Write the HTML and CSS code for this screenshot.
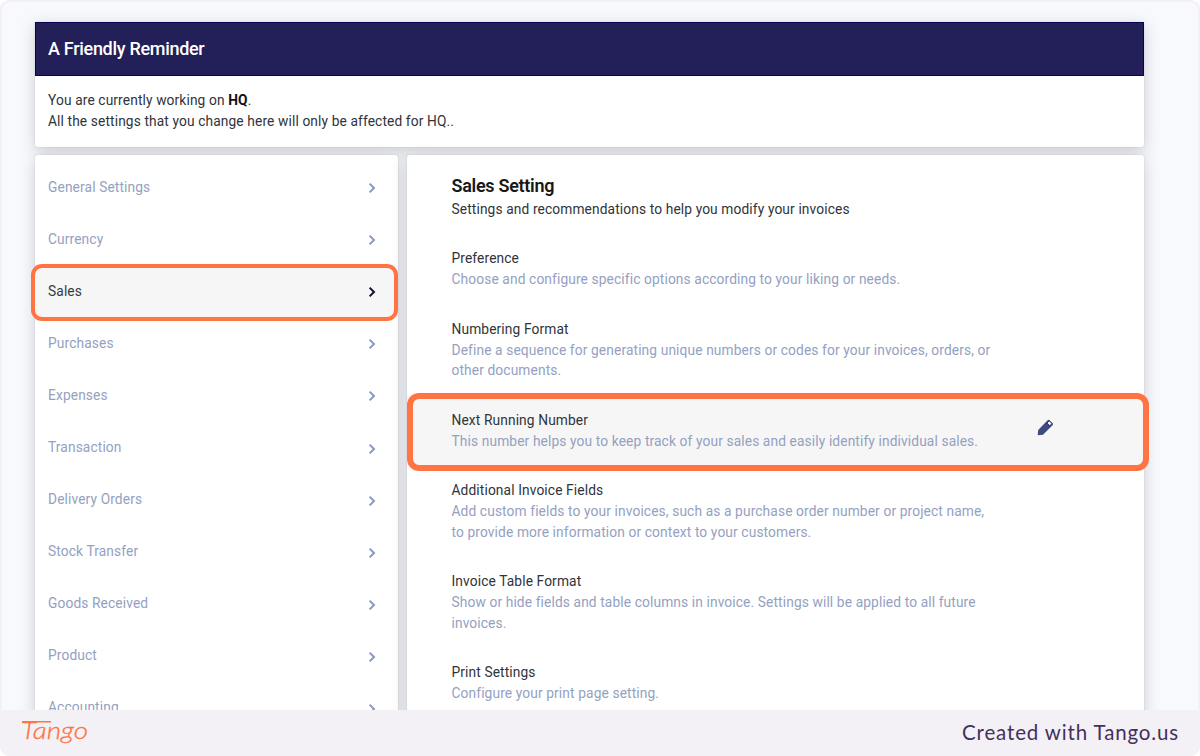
FILE: index.html
```html
<!DOCTYPE html>
<html lang="en">
<head>
<meta charset="utf-8">
<title>Sales Setting</title>
<link rel="stylesheet" href="styles.css">
</head>
<body>
<svg width="0" height="0" class="defs">
  <symbol id="chevron" viewBox="0 0 8 12"><path d="M1.6 1.6 6 6 1.6 10.4" fill="none" stroke="currentColor" stroke-width="2"/></symbol>
</svg>
<div class="frame">
  <main class="page">
    <section class="card reminder">
      <h1 class="reminder-title">A Friendly Reminder</h1>
      <div class="reminder-body">
        <div>You are currently working on <b>HQ</b>.</div>
        <div>All the settings that you change here will only be affected for HQ..</div>
      </div>
    </section>
    <div class="columns">
      <nav class="card menu">
        <a class="menu-item"><span>General Settings</span><svg class="chevron"><use href="#chevron"/></svg></a>
        <a class="menu-item"><span>Currency</span><svg class="chevron"><use href="#chevron"/></svg></a>
        <a class="menu-item active"><span>Sales</span><svg class="chevron"><use href="#chevron"/></svg></a>
        <a class="menu-item"><span>Purchases</span><svg class="chevron"><use href="#chevron"/></svg></a>
        <a class="menu-item"><span>Expenses</span><svg class="chevron"><use href="#chevron"/></svg></a>
        <a class="menu-item"><span>Transaction</span><svg class="chevron"><use href="#chevron"/></svg></a>
        <a class="menu-item"><span>Delivery Orders</span><svg class="chevron"><use href="#chevron"/></svg></a>
        <a class="menu-item"><span>Stock Transfer</span><svg class="chevron"><use href="#chevron"/></svg></a>
        <a class="menu-item"><span>Goods Received</span><svg class="chevron"><use href="#chevron"/></svg></a>
        <a class="menu-item"><span>Product</span><svg class="chevron"><use href="#chevron"/></svg></a>
        <a class="menu-item"><span>Accounting</span><svg class="chevron"><use href="#chevron"/></svg></a>
      </nav>
      <section class="card settings">
        <h2 class="settings-title">Sales Setting</h2>
        <p class="settings-sub">Settings and recommendations to help you modify your invoices</p>
        <div class="item"><h3>Preference</h3><p>Choose and configure specific options according to your liking or needs.</p></div>
        <div class="item"><h3>Numbering Format</h3><p>Define a sequence for generating unique numbers or codes for your invoices, orders, or<br>other documents.</p></div>
        <div class="item selected">
          <div><h3>Next Running Number</h3><p>This number helps you to keep track of your sales and easily identify individual sales.</p></div>
          <svg class="pencil" viewBox="0 0 17 17"><path d="M.7 16.3 1.2 11 10.6 1.3q1-.9 2 0l2.9 2.9q.9 1 0 2L6 15.8Z" fill="#3c4b80"/><path d="m10 4.1 1.8-1.9q.5-.4 1 0l1.8 1.8q.4.5 0 1l-1.9 1.8Z" fill="#f6f6f6" stroke="#1c2c68" stroke-width="1"/></svg>
        </div>
        <div class="item"><h3>Additional Invoice Fields</h3><p>Add custom fields to your invoices, such as a purchase order number or project name,<br>to provide more information or context to your customers.</p></div>
        <div class="item"><h3>Invoice Table Format</h3><p>Show or hide fields and table columns in invoice. Settings will be applied to all future<br>invoices.</p></div>
        <div class="item"><h3>Print Settings</h3><p>Configure your print page setting.</p></div>
      </section>
    </div>
  </main>
  <footer class="footer">
    <svg class="logo" viewBox="0 0 72 36"><text x="0" y="24" textLength="67" lengthAdjust="spacingAndGlyphs">Tango</text><path d="M1 6.7H30" fill="none" stroke="#ff7442" stroke-width="1.5"/></svg>
    <span class="credit">Created with Tango.us</span>
  </footer>
</div>
</body>
</html>
```
FILE: styles.css
```css
*, *::before, *::after { box-sizing: border-box; }
body { margin: 0; background: #fff; font-family: Roboto, sans-serif; font-size: 13.75px; letter-spacing: .12px; color: #30343a; }
h1, h2, h3, p { margin: 0; font-weight: 400; font-size: inherit; }
.defs { position: absolute; }
.frame { width: 1200px; height: 756px; display: flex; flex-direction: column; overflow: hidden; border-radius: 9px; background: #f3f0f6; }
.page { flex: 1; min-height: 0; margin: 2px 2px 0; padding: 19.5px 54px 0 33px; overflow: hidden; border-radius: 8px 8px 0 0; background: #f8f9fd; display: flex; flex-direction: column; gap: 8px; }
.card { background: #fff; border-radius: 2px; box-shadow: 0 0 1px rgba(40, 42, 50, .35), 0 4px 16px rgba(40, 45, 50, .21); }
.reminder { height: 125.5px; flex: none; }
.reminder-title { height: 54px; padding-left: 12px; line-height: 51px; font-size: 18px; letter-spacing: -.3px; font-weight: 500; color: #fff; background: #231f58; border: 1px solid #080450; }
.reminder-body { padding: 14px 13px; line-height: 21.3px; }
.reminder-body b { font-weight: 700; color: #111; }
.columns { display: flex; gap: 9px; height: 610px; flex: none; }
.menu { width: 363px; padding-top: 6px; flex: none; }
.menu-item { height: 52.1px; padding: 0 22px 0 13px; display: flex; align-items: center; justify-content: space-between; color: #94a1c1; }
.menu-item span { padding-bottom: 1px; }
.chevron { width: 8px; height: 12px; margin-top: 2px; color: #8898c0; }
.active { position: relative; color: #343a45; background: #f6f6f6; }
.active .chevron { color: #10152e; }
.active::after { content: ""; position: absolute; left: -4px; right: 0; top: -1px; height: 57px; border: 4px solid #ff7442; border-radius: 11px; }
.settings { flex: 1; padding-top: 20px; }
.settings-title { padding-left: 44.5px; height: 23px; line-height: 22px; font-size: 18px; letter-spacing: -.3px; font-weight: 600; color: #181818; }
.settings-sub { padding-left: 44.5px; height: 35.7px; line-height: 22.5px; }
.item { padding: 14.5px 0 14.7px 44.5px; line-height: 20.5px; }
.item p { color: #94a1c1; padding-top: .8px; margin-bottom: -.5px; }
.selected { position: relative; display: flex; justify-content: space-between; padding-right: 90px; background: #f6f6f6; }
.selected::after { content: ""; position: absolute; left: 0; right: -5px; top: -2px; height: 78px; border: 6px solid #ff7442; border-radius: 12px; }
.pencil { width: 17px; height: 17px; margin-top: 9px; }
.footer { height: 46px; flex: none; display: flex; align-items: center; justify-content: space-between; padding: 0 21px; letter-spacing: 0; }
.logo { width: 72px; height: 36px; }
.logo text { font: italic 300 24px Lato, sans-serif; fill: #ff7442; stroke: #ff7442; stroke-width: .3; }
.credit { font: 400 20.5px/44px Lato, sans-serif; letter-spacing: .85px; color: #44305a; padding-bottom: 2px; }
```
